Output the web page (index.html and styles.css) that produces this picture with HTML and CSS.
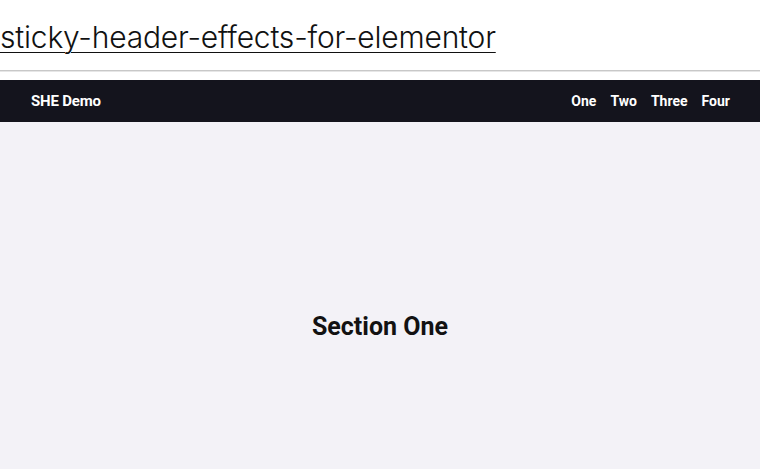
FILE: index.html
```html
<!DOCTYPE html>
<html lang="en">
<head>
<meta charset="utf-8">
<title>sticky-header-effects-for-elementor</title>
<link rel="stylesheet" href="styles.css">
</head>
<body>
<div class="top">
  <a class="title" href="#">sticky-header-effects-for-elementor</a>
</div>
<hr class="rule">
<header class="site-header">
  <div class="brand">SHE Demo</div>
  <nav class="menu">
    <a href="#">One</a>
    <a href="#">Two</a>
    <a href="#">Three</a>
    <a href="#">Four</a>
  </nav>
</header>
<section class="section">
  <h2 class="section-title">Section One</h2>
</section>
</body>
</html>
```

FILE: styles.css
```css
html, body {
  margin: 0;
  padding: 0;
  background: #ffffff;
}
.top {
  height: 70px;
  display: flex;
  align-items: flex-start;
}
.title {
  margin-top: 17px;
  font-family: Inter, "Liberation Sans", sans-serif;
  font-weight: 300;
  font-size: 30px;
  line-height: 40px;
  color: #111111;
  text-decoration: underline;
  text-decoration-thickness: 1px;
  text-underline-offset: 4px;
  font-variant-ligatures: none;
  letter-spacing: -0.2px;
}
.rule {
  margin: 0 0 8px 0;
  border: 0;
  border-top: 1px solid #c8c8c8;
  border-bottom: 1px solid #e6e6e6;
  height: 0;
}
.site-header {
  height: 42px;
  background: #14141d;
  display: flex;
  align-items: center;
  justify-content: space-between;
  padding: 0 30px 0 31px;
  font-family: Roboto, "Liberation Sans", sans-serif;
  font-weight: 700;
  color: #ffffff;
  box-shadow: 0 1px 0 #0a0a10;
}
.brand {
  font-size: 15px;
  letter-spacing: -0.2px;
}
.menu {
  display: flex;
  gap: 14px;
}
.menu a {
  color: #ffffff;
  text-decoration: none;
  font-size: 14px;
}
.section {
  background: #f3f2f7;
  height: 408px;
  display: flex;
  align-items: center;
  justify-content: center;
}
.section-title {
  margin: 0;
  font-family: Roboto, "Liberation Sans", sans-serif;
  font-weight: 700;
  font-size: 25px;
  color: #121212;
}
```
